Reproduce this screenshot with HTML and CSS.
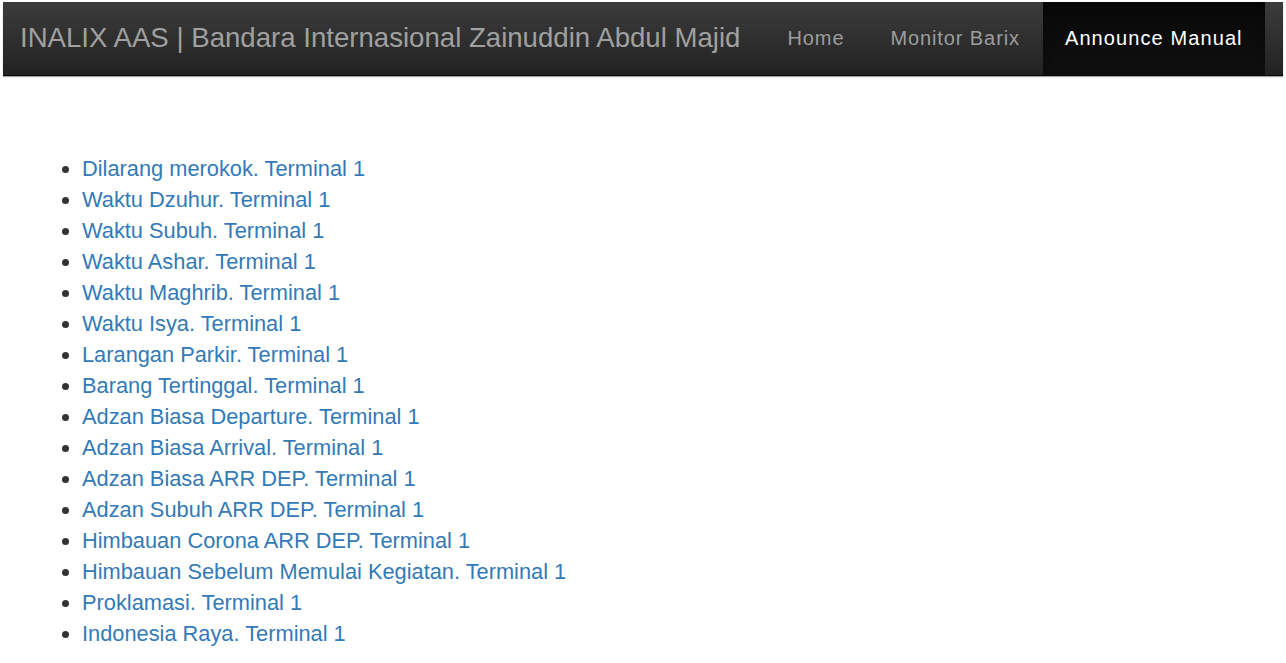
FILE: index.html
```html
<!DOCTYPE html>
<html>
<head>
<meta charset="utf-8">
<title>Announce Manual</title>
<link rel="stylesheet" href="styles.css">
</head>
<body>
<nav class="navbar">
  <a class="brand" href="#">INALIX AAS | Bandara Internasional Zainuddin Abdul Majid</a>
  <ul class="nav">
    <li><a href="#">Home</a></li>
    <li><a href="#">Monitor Barix</a></li>
    <li class="active"><a href="#">Announce Manual</a></li>
  </ul>
</nav>
<main class="content">
  <ul class="list">
    <li><a href="#">Dilarang merokok. Terminal 1</a></li>
    <li><a href="#">Waktu Dzuhur. Terminal 1</a></li>
    <li><a href="#">Waktu Subuh. Terminal 1</a></li>
    <li><a href="#">Waktu Ashar. Terminal 1</a></li>
    <li><a href="#">Waktu Maghrib. Terminal 1</a></li>
    <li><a href="#">Waktu Isya. Terminal 1</a></li>
    <li><a href="#">Larangan Parkir. Terminal 1</a></li>
    <li><a href="#">Barang Tertinggal. Terminal 1</a></li>
    <li><a href="#">Adzan Biasa Departure. Terminal 1</a></li>
    <li><a href="#">Adzan Biasa Arrival. Terminal 1</a></li>
    <li><a href="#">Adzan Biasa ARR DEP. Terminal 1</a></li>
    <li><a href="#">Adzan Subuh ARR DEP. Terminal 1</a></li>
    <li><a href="#">Himbauan Corona ARR DEP. Terminal 1</a></li>
    <li><a href="#">Himbauan Sebelum Memulai Kegiatan. Terminal 1</a></li>
    <li><a href="#">Proklamasi. Terminal 1</a></li>
    <li><a href="#">Indonesia Raya. Terminal 1</a></li>
  </ul>
</main>
</body>
</html>
```
FILE: styles.css
```css
html, body {
  margin: 0;
  padding: 0;
  background: #fff;
}
body {
  font-family: "Liberation Sans", Arial, sans-serif;
  color: #333;
}
.navbar {
  margin: 2px 3px 0 3px;
  height: 73px;
  display: flex;
  align-items: stretch;
  background: linear-gradient(to bottom, #3c3c3c 0%, #222 100%);
  border-bottom: 1px solid #080808;
  box-shadow: 0 1px 1px rgba(0, 0, 0, 0.35);
}
.brand {
  display: flex;
  align-items: center;
  padding: 0 0 1px 17px;
  font-size: 27.6px;
  color: #a0a0a0;
  text-decoration: none;
  margin-right: 24px;
}
.nav {
  list-style: none;
  margin: 0;
  padding: 0;
  display: flex;
}
.nav li {
  display: flex;
}
.nav a {
  display: flex;
  align-items: center;
  padding: 0 23px 1px 23px;
  font-size: 20px;
  letter-spacing: 0.9px;
  color: #9d9d9d;
  text-decoration: none;
}
.nav .active a {
  color: #fff;
  padding: 0 22px 1px 22px;
  letter-spacing: 1.1px;
  background: linear-gradient(to bottom, #080808 0%, #0f0f0f 100%);
  box-shadow: inset 0 3px 9px rgba(0, 0, 0, 0.25);
}
.content {
  padding: 77px 0 0 0;
}
.list {
  margin: 0;
  padding-left: 82px;
  font-size: 21.8px;
  line-height: 31px;
}
.list a {
  color: #337ab7;
  text-decoration: none;
}
```
